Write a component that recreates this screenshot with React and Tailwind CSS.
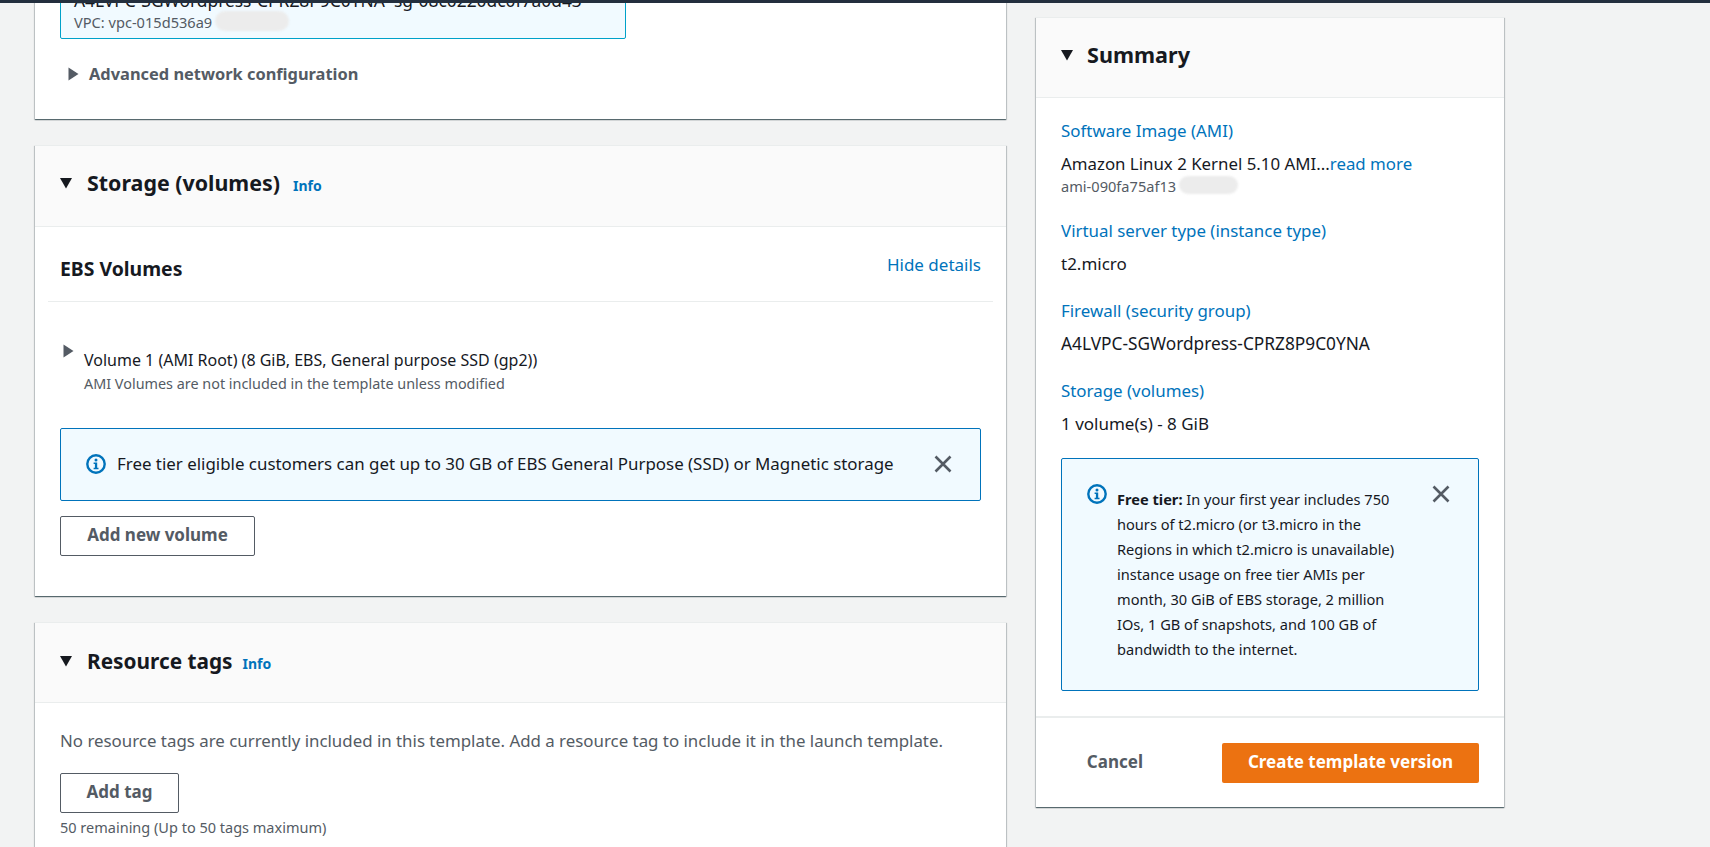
import React from 'react';

const cardClass = 'bg-white border-t border-[#eaeded] shadow-[0_1px_1px_0_rgba(0,28,36,0.5),1px_1px_1px_0_rgba(0,28,36,0.15),-1px_1px_1px_0_rgba(0,28,36,0.15)]';

const CaretDown = () => (
  <svg width="12" height="12" viewBox="0 0 12 12" className="shrink-0 fill-[#16191f]">
    <path d="M0 1h12L6 11.5z" />
  </svg>
);

const CaretRight = () => (
  <svg width="11" height="14" viewBox="0 0 11 14" className="shrink-0 fill-[#545b64]">
    <path d="M0.5 0.5L10.5 7L0.5 13.5z" />
  </svg>
);

const InfoIcon = () => (
  <svg width="20" height="20" viewBox="0 0 20 20" className="shrink-0">
    <circle cx="10" cy="10" r="8.7" fill="none" stroke="#0073bb" strokeWidth="2.4" />
    <circle cx="10" cy="6" r="1.5" fill="#0073bb" />
    <path d="M7.6 8.6h3.6v5.2h1.3v1.5H7.6v-1.5h1.3v-3.7H7.6z" fill="#0073bb" />
  </svg>
);

const CloseIcon = ({ className = '' }) => (
  <svg width="18" height="18" viewBox="0 0 18 18" className={`shrink-0 ${className}`}>
    <path d="M1.5 1.5L16.5 16.5M16.5 1.5L1.5 16.5" stroke="#545b64" strokeWidth="2.6" fill="none" />
  </svg>
);

const Blur = ({ className }) => (
  <span className={`absolute rounded-full bg-[#ececec] blur-[1px] ${className}`} />
);

const OutlineButton = ({ children, className = '' }) => (
  <button className={`h-[40px] pb-[2px] border border-[#545b64] rounded-[2px] bg-white text-[17px] font-bold text-[#545b64] ${className}`}>
    {children}
  </button>
);

const SummaryItem = ({ label, children }) => (
  <div>
    <a className="block text-[16.9px] leading-[24px] text-[#0073bb]">{label}</a>
    <div className="mt-[9px] text-[17px] leading-[24px] text-[#16191f]">{children}</div>
  </div>
);

export default function App() {
  return (
    <div className="relative h-screen overflow-hidden bg-[#f2f3f3] font-['Noto_Sans',sans-serif]">
      <div className="absolute top-0 left-0 right-0 h-[3px] bg-[#232f3e] z-10" />

      <div className="flex pl-[35px] items-start">
        {/* Left column, page is scrolled so the first card starts above the top */}
        <main className="w-[971px] -mt-[30px] flex flex-col gap-[26px]">
          <section className={`${cardClass} pt-[16px] pb-[33px]`}>
            <div className="relative ml-[25px] w-[566px] h-[52px] border border-[#00a1c9] rounded-[2px] bg-[#f1faff] pl-[13px] pr-[12px]">
              <div className="text-[17.4px] leading-[24px] text-[#16191f] whitespace-nowrap">A4LVPC-SGWordpress-CPRZ8P9C0YNA&nbsp; sg-08c0220dc0f7a0d43</div>
              <div className="relative text-[14.6px] leading-[20px] text-[#545b64]">
                VPC: vpc-015d536a9
                <Blur className="left-[141px] top-[-1px] w-[74px] h-[20px]" />
              </div>
              <CloseIcon className="absolute right-[8px] top-[-7px]" />
            </div>
            <div className="flex items-center gap-[10px] ml-[33px] mt-[23px]">
              <CaretRight />
              <span className="text-[16.4px] leading-[24px] font-bold text-[#545b64]">Advanced network configuration</span>
            </div>
          </section>

          <section className={`${cardClass} pb-[40px]`}>
            <header className="h-[81px] bg-[#fafafa] border-b border-[#eaeded] flex items-center pl-[25px] pb-[7px]">
              <CaretDown />
              <h2 className="ml-[15px] text-[21.4px] leading-[28px] font-bold text-[#16191f]">Storage (volumes)</h2>
              <a className="ml-[13px] mt-[6px] text-[14px] font-bold text-[#0073bb]">Info</a>
            </header>
            <div className="mx-[13px] h-[75px] border-b border-[#eaeded] flex justify-between pl-[12px] pr-[12px]">
              <h3 className="mt-[29px] text-[19.4px] leading-[26px] font-bold text-[#16191f]">EBS Volumes</h3>
              <a className="mt-[26px] text-[17px] leading-[24px] text-[#0073bb]">Hide details</a>
            </div>
            <div className="flex gap-[10px] ml-[28px] mt-[42px]">
              <div className="pt-0"><CaretRight /></div>
              <div className="pt-[4px]">
                <div className="text-[16px] leading-[24px] text-[#16191f]">Volume 1 (AMI Root) (8 GiB, EBS, General purpose SSD (gp2))</div>
                <div className="text-[14.4px] leading-[20px] text-[#545b64] mt-[2px]">AMI Volumes are not included in the template unless modified</div>
              </div>
            </div>
            <div className="mx-[25px] mt-[34px] h-[73px] pb-[2px] border border-[#0073bb] rounded-[2px] bg-[#f1faff] flex items-center pl-[25px] pr-[28px]">
              <InfoIcon />
              <p className="ml-[11px] flex-1 text-[16.9px] leading-[24px] text-[#16191f] whitespace-nowrap">Free tier eligible customers can get up to 30 GB of EBS General Purpose (SSD) or Magnetic storage</p>
              <CloseIcon />
            </div>
            <OutlineButton className="ml-[25px] mt-[15px] w-[195px]">Add new volume</OutlineButton>
          </section>

          <section className={`${cardClass} pb-[40px]`}>
            <header className="h-[80px] bg-[#fafafa] border-b border-[#eaeded] flex items-center pl-[25px] pb-[4px]">
              <CaretDown />
              <h2 className="ml-[15px] text-[20.8px] leading-[28px] font-bold text-[#16191f]">Resource tags</h2>
              <a className="ml-[10px] mt-[6px] text-[14px] font-bold text-[#0073bb]">Info</a>
            </header>
            <div className="px-[25px]">
              <p className="mt-[26px] text-[16.88px] leading-[24px] text-[#545b64] whitespace-nowrap">No resource tags are currently included in this template. Add a resource tag to include it in the launch template.</p>
              <OutlineButton className="mt-[20px] w-[119px]">Add tag</OutlineButton>
              <p className="mt-[4px] text-[14.5px] leading-[20px] text-[#545b64]">50 remaining (Up to 50 tags maximum)</p>
            </div>
          </section>
        </main>

        {/* Summary panel */}
        <aside className={`${cardClass} ml-[30px] mt-[17px] w-[468px]`}>
          <header className="h-[80px] bg-[#fafafa] border-b border-[#eaeded] flex items-center gap-[14px] pl-[25px] pb-[6px]">
            <CaretDown />
            <h2 className="text-[21.6px] leading-[28px] font-bold text-[#16191f]">Summary</h2>
          </header>
          <div className="px-[25px] pt-[21px] flex flex-col gap-[23px]">
            <SummaryItem label="Software Image (AMI)">
              <div className="whitespace-nowrap text-[16.85px]">Amazon Linux 2 Kernel 5.10 AMI...<a className="text-[#0073bb]">read more</a></div>
              <div className="relative text-[14.6px] leading-[20px] text-[#545b64] w-fit">
                ami-090fa75af13
                <Blur className="left-[118px] top-0 w-[59px] h-[18px]" />
              </div>
            </SummaryItem>
            <SummaryItem label="Virtual server type (instance type)">t2.micro</SummaryItem>
            <SummaryItem label="Firewall (security group)"><span className="text-[17.3px]">A4LVPC-SGWordpress-CPRZ8P9C0YNA</span></SummaryItem>
            <SummaryItem label="Storage (volumes)">1 volume(s) - 8 GiB</SummaryItem>
          </div>
          <div className="mx-[25px] mt-[22px] h-[233px] border border-[#0073bb] rounded-[2px] bg-[#f1faff] flex pl-[25px] pr-[28px] pt-[25px]">
            <InfoIcon />
            <p className="ml-[10px] mt-[-3px] w-[285px] text-[14.6px] leading-[25px] pt-[6px] text-[#16191f]">
              <b>Free tier:</b> In your first year includes 750 hours of t2.micro (or t3.micro in the Regions in which t2.micro is unavailable) instance usage on free tier AMIs per month, 30 GiB of EBS storage, 2 million IOs, 1 GB of snapshots, and 100 GB of bandwidth to the internet.
            </p>
            <CloseIcon className="ml-auto mt-px" />
          </div>
          <footer className="mt-[25px] h-[91px] border-t-2 border-[#eaeded] flex items-center justify-end gap-[79px] pr-[25px]">
            <button className="pb-[2px] text-[17px] font-bold text-[#545b64]">Cancel</button>
            <button className="h-[40px] w-[257px] pb-[2px] rounded-[2px] bg-[#ec7211] text-[17px] font-bold text-white">Create template version</button>
          </footer>
        </aside>
      </div>
    </div>
  );
}
